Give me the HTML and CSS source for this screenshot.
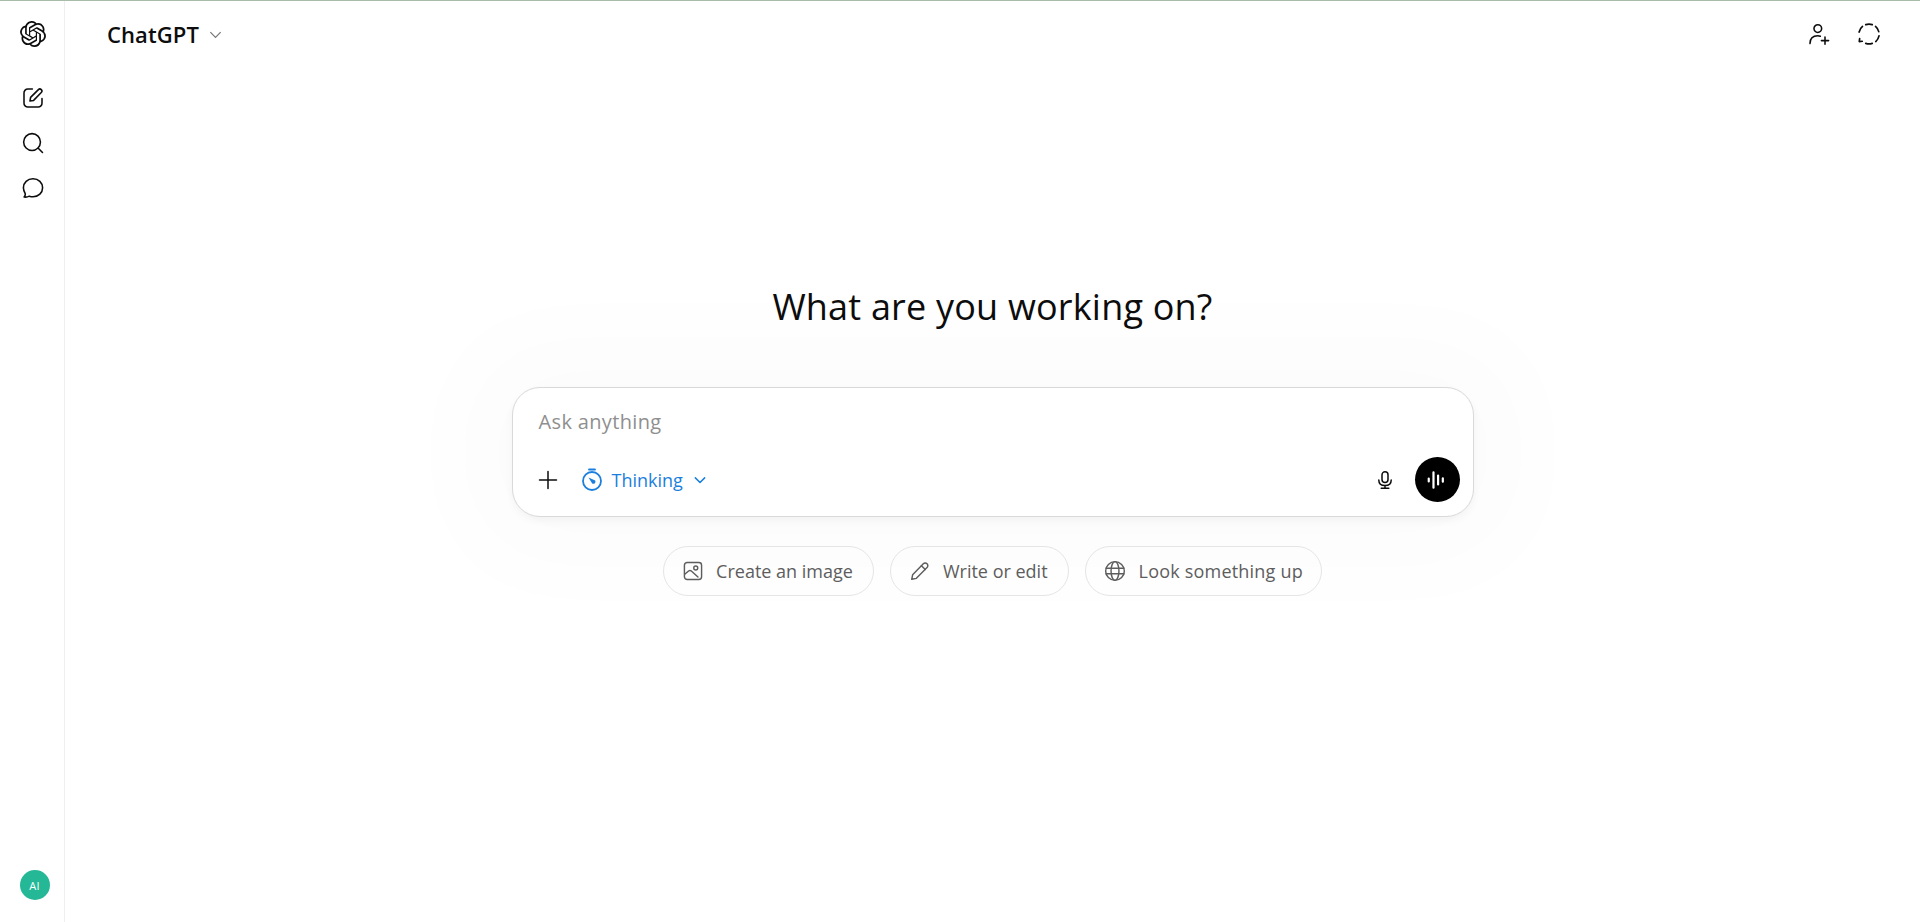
FILE: index.html
```html
<!DOCTYPE html>
<html lang="en">
<head>
<meta charset="utf-8">
<title>ChatGPT</title>
<link rel="stylesheet" href="styles.css">
</head>
<body>
<div class="topline"></div>
<div class="app">
  <aside class="rail">
    <div class="rail-top">
      <svg class="logo" viewBox="0 0 24 24"><path fill="#0d0d0d" d="M22.2819 9.8211a5.9847 5.9847 0 0 0-.5157-4.9108 6.0462 6.0462 0 0 0-6.5098-2.9A6.0651 6.0651 0 0 0 4.9807 4.1818a5.9847 5.9847 0 0 0-3.9977 2.9 6.0462 6.0462 0 0 0 .7427 7.0966 5.98 5.98 0 0 0 .511 4.9107 6.051 6.051 0 0 0 6.5146 2.9001A5.9847 5.9847 0 0 0 13.2599 24a6.0557 6.0557 0 0 0 5.7718-4.2058 5.9894 5.9894 0 0 0 3.9977-2.9001 6.0557 6.0557 0 0 0-.7475-7.0729zm-9.022 12.6081a4.4755 4.4755 0 0 1-2.8764-1.0408l.1419-.0804 4.7783-2.7582a.7948.7948 0 0 0 .3927-.6813v-6.7369l2.02 1.1686a.071.071 0 0 1 .038.052v5.5826a4.504 4.504 0 0 1-4.4945 4.4944zm-9.6607-4.1254a4.4708 4.4708 0 0 1-.5346-3.0137l.142.0852 4.783 2.7582a.7712.7712 0 0 0 .7806 0l5.8428-3.3685v2.3324a.0804.0804 0 0 1-.0332.0615L9.74 19.9502a4.4992 4.4992 0 0 1-6.1408-1.6464zM2.3408 7.8956a4.485 4.485 0 0 1 2.3655-1.9728V11.6a.7664.7664 0 0 0 .3879.6765l5.8144 3.3543-2.0201 1.1685a.0757.0757 0 0 1-.071 0l-4.8303-2.7865A4.504 4.504 0 0 1 2.3408 7.872zm16.5963 3.8558L13.1038 8.364 15.1192 7.2a.0757.0757 0 0 1 .071 0l4.8303 2.7913a4.4944 4.4944 0 0 1-.6765 8.1042v-5.6772a.79.79 0 0 0-.407-.667zm2.0107-3.0231l-.142-.0852-4.7735-2.7818a.7759.7759 0 0 0-.7854 0L9.409 9.2297V6.8974a.0662.0662 0 0 1 .0284-.0615l4.8303-2.7866a4.4992 4.4992 0 0 1 6.6802 4.66zM8.3065 12.863l-2.02-1.1638a.0804.0804 0 0 1-.038-.0567V6.0742a4.4992 4.4992 0 0 1 7.3757-3.4537l-.142.0805L8.704 5.459a.7948.7948 0 0 0-.3927.6813zm1.0976-2.3654l2.602-1.4998 2.6069 1.4998v2.9994l-2.5974 1.4997-2.6067-1.4997Z"/></svg>
      <nav class="rail-nav">
        <svg class="ico" viewBox="0 0 20 20"><path d="M9.5 2.500H6A3.200 3.200 0 0 0 2.500 6v8A3.200 3.200 0 0 0 6 17.500h8a3.200 3.200 0 0 0 3.500-3.500v-3.500"/><path d="M7.500 12.500l.5-3 6.500-6.500a1.700 1.700 0 0 1 2.400 0 1.700 1.700 0 0 1 0 2.400l-6.400 6.600-3 .5z"/></svg>
        <svg class="ico" viewBox="0 0 20 20"><circle cx="9.200" cy="9.200" r="7"/><path d="M14.400 14.400l3.500 3.500"/></svg>
        <svg class="ico" viewBox="0 0 20 20"><path d="M10 2.300c4.600 0 8 3.300 8 7.500s-3.400 7.500-8 7.500c-1.100 0-2.200-.2-3.100-.5-.9.500-2.900.9-4.300.7.600-.7 1-1.600 1-2.600C2.800 13.400 2 11.800 2 9.800 2 5.600 5.400 2.300 10 2.300z"/></svg>
      </nav>
    </div>
    <div class="avatar">AI</div>
  </aside>
  <main class="main">
    <header class="header">
      <div class="model">
        <span class="model-name">ChatGPT</span>
        <svg class="model-caret" viewBox="0 0 16 16"><path d="M2.500 5.500L8 11l5.500-5.500"/></svg>
      </div>
      <div class="header-actions">
        <svg class="ico" viewBox="0 0 20 20"><circle cx="9" cy="5.500" r="3.200"/><path d="M2.500 18c0-4 2.300-6.500 6.500-6.500 .8 0 1.500.1 2.100.3"/><path d="M15 12.500v6M12 15.500h6"/></svg>
        <svg class="ico dashed" viewBox="0 0 20 20"><path d="M7.500 2.800a7.800 7.800 0 0 1 5 0M15 4.200a7.800 7.800 0 0 1 2.500 4M17.700 11.500a7.800 7.800 0 0 1-2.500 4.300M12.500 17.200a7.800 7.800 0 0 1-5 0M4.800 15.600l-2.300.2.300-2.200M2.400 8.500a7.800 7.800 0 0 1 2.600-4.300"/></svg>
      </div>
    </header>
    <section class="center">
      <h1 class="title">What are you working on?</h1>
      <div class="composer">
        <div class="placeholder">Ask anything</div>
        <div class="composer-bar">
          <div class="composer-left">
            <svg class="plus" viewBox="0 0 20 20"><path d="M10 1.500v17M1.500 10h17"/></svg>
            <div class="thinking">
              <svg class="timer" viewBox="0 0 22 24"><path class="thin" d="M8 1.500h6"/><circle class="thin" cx="11" cy="13" r="9"/><path class="hand" d="M7.500 9.500l6.700 3a2.200 2.200 0 0 1-3 3z"/></svg>
              <span>Thinking</span>
              <svg class="caret" viewBox="0 0 12 12"><path d="M2 4.200L6 8.200l4-4"/></svg>
            </div>
          </div>
          <div class="composer-right">
            <svg class="mic" viewBox="0 0 20 20"><rect x="7" y="1.800" width="6" height="10.700" rx="3"/><path d="M3.800 10c0 3.600 2.700 5.600 6.200 5.600s6.200-2 6.200-5.600M10 15.600v2.400M6.200 18.200h7.600"/></svg>
            <div class="voice">
              <svg viewBox="0 0 20 20"><path d="M2.500 8.700v2.600M6.800 3v14M11 6v8M15.300 8.500v3"/></svg>
            </div>
          </div>
        </div>
      </div>
      <div class="chips">
        <div class="chip">
          <svg class="ico chip-ico" viewBox="0 0 20 20"><rect x="2.200" y="2.200" width="15.600" height="15.600" rx="2.500"/><circle cx="12.500" cy="7.300" r="1.800"/><path d="M2.500 13l3.500-3c.8-.7 1.700-.7 2.500 0l6 5.500"/></svg>
          <span>Create an image</span>
        </div>
        <div class="chip">
          <svg class="ico chip-ico" viewBox="0 0 20 20"><path d="M2.500 17.500l.8-4L13 3.500a2.400 2.400 0 0 1 3.400 0 2.400 2.400 0 0 1 0 3.400L6.700 16.700z"/><path d="M11.300 5.200l3.500 3.500"/></svg>
          <span>Write or edit</span>
        </div>
        <div class="chip chip-search">
          <svg class="ico chip-ico" viewBox="0 0 20 20"><circle cx="10" cy="10" r="8.500"/><ellipse cx="10" cy="10" rx="3.600" ry="8.500"/><path d="M1.800 7.500h16.400M1.800 12.500h16.400"/></svg>
          <span>Look something up</span>
        </div>
      </div>
    </section>
  </main>
</div>
</body>
</html>
```
FILE: styles.css
```css
* { box-sizing: border-box; }
html, body { height: 100%; margin: 0; }
body {
  background: #fff;
  color: #0d0d0d;
  font-family: "Open Sans", "Noto Sans", "Liberation Sans", sans-serif;
  overflow: hidden;
}
.topline { height: 1px; background: #a9bba9; }
.app { display: flex; height: 921px; }

.rail {
  width: 65px;
  flex: none;
  border-right: 1px solid #efefef;
  display: flex;
  flex-direction: column;
  justify-content: space-between;
  align-items: center;
  padding: 20px 0 22px 2px;
}
.rail-top { display: flex; flex-direction: column; align-items: center; }
.logo { width: 26px; height: 26px; display: block; }
.rail-nav { display: flex; flex-direction: column; align-items: center; gap: 21px; margin-top: 39px; }

.ico { width: 24px; height: 24px; display: block; fill: none; stroke: #0d0d0d; stroke-width: 1.3; stroke-linecap: round; stroke-linejoin: round; }
.dashed { width: 26px; height: 26px; }

.avatar {
  width: 30px; height: 30px; border-radius: 50%;
  background: #25b897; color: #fff;
  font-size: 11px; letter-spacing: .2px;
  margin-left: 3px;
  display: flex; align-items: center; justify-content: center;
}

.main { flex: 1; display: flex; flex-direction: column; min-width: 0; }
.header {
  height: 68px; flex: none;
  display: flex; align-items: center; justify-content: space-between;
  padding: 0 38px 2px 42px;
}
.model { display: flex; align-items: center; gap: 9px; }
.model-name { font-size: 22px; font-weight: 600; letter-spacing: .1px; }
.model-caret { width: 15px; height: 15px; fill: none; stroke: #777; stroke-width: 1.300; }
.header-actions { display: flex; gap: 25px; align-items: center; }

.center { display: flex; flex-direction: column; align-items: center; padding-top: 214px; }
.title { margin: 0; font-size: 36px; line-height: 48px; font-weight: 400; letter-spacing: .2px; color: #0d0d0d; }

.composer {
  width: 962px; height: 130px; margin-top: 56px;
  background: #fff;
  border: 1px solid #d9d9d9;
  border-radius: 28px;
  box-shadow: 0 4px 8px rgba(0,0,0,.04), 0 0 100px 50px rgba(0,0,0,.015);
  padding: 0 13px 14px 25px;
  display: flex; flex-direction: column; justify-content: space-between;
}
.placeholder { font-size: 20px; line-height: 28px; letter-spacing: .35px; color: #8f8f8f; margin: 20px 0 0 1px; }
.composer-bar { display: flex; justify-content: space-between; align-items: center; }
.composer-left { display: flex; align-items: center; gap: 23px; }
.plus { width: 20px; height: 20px; fill: none; stroke: #0d0d0d; stroke-width: 1.500; stroke-linecap: round; }
.thinking { display: flex; align-items: center; gap: 9px; color: #1b7fde; font-size: 18px; }
.timer { width: 22px; height: 24px; fill: none; }
.timer .thin { stroke: #1b7fde; stroke-width: 1.800; stroke-linecap: round; }
.timer .hand { fill: #1b7fde; }
.caret { width: 14px; height: 14px; fill: none; stroke: #1b7fde; stroke-width: 1.300; stroke-linecap: round; stroke-linejoin: round; margin-left: 1px; }
.composer-right { display: flex; align-items: center; gap: 20px; }
.mic { width: 20px; height: 22px; fill: none; stroke: #0d0d0d; stroke-width: 1.500; stroke-linecap: round; }
.voice { width: 45px; height: 45px; border-radius: 50%; background: #000; display: flex; align-items: center; justify-content: center; }
.voice svg { width: 22px; height: 22px; fill: none; stroke: #fff; stroke-width: 2; stroke-linecap: round; }

.chips { display: flex; gap: 16px; margin-top: 29px; }
.chip {
  height: 50px; padding: 0 20px;
  display: flex; align-items: center; gap: 12px;
  border: 1px solid #e5e5e5; border-radius: 25px;
  color: #5d5d5d; font-size: 18px;
}
.chip-search { gap: 13px; letter-spacing: .2px; padding-right: 18px; }
.chip-ico { stroke: #5d5d5d; width: 22px; height: 22px; margin-left: -2px; }
```
